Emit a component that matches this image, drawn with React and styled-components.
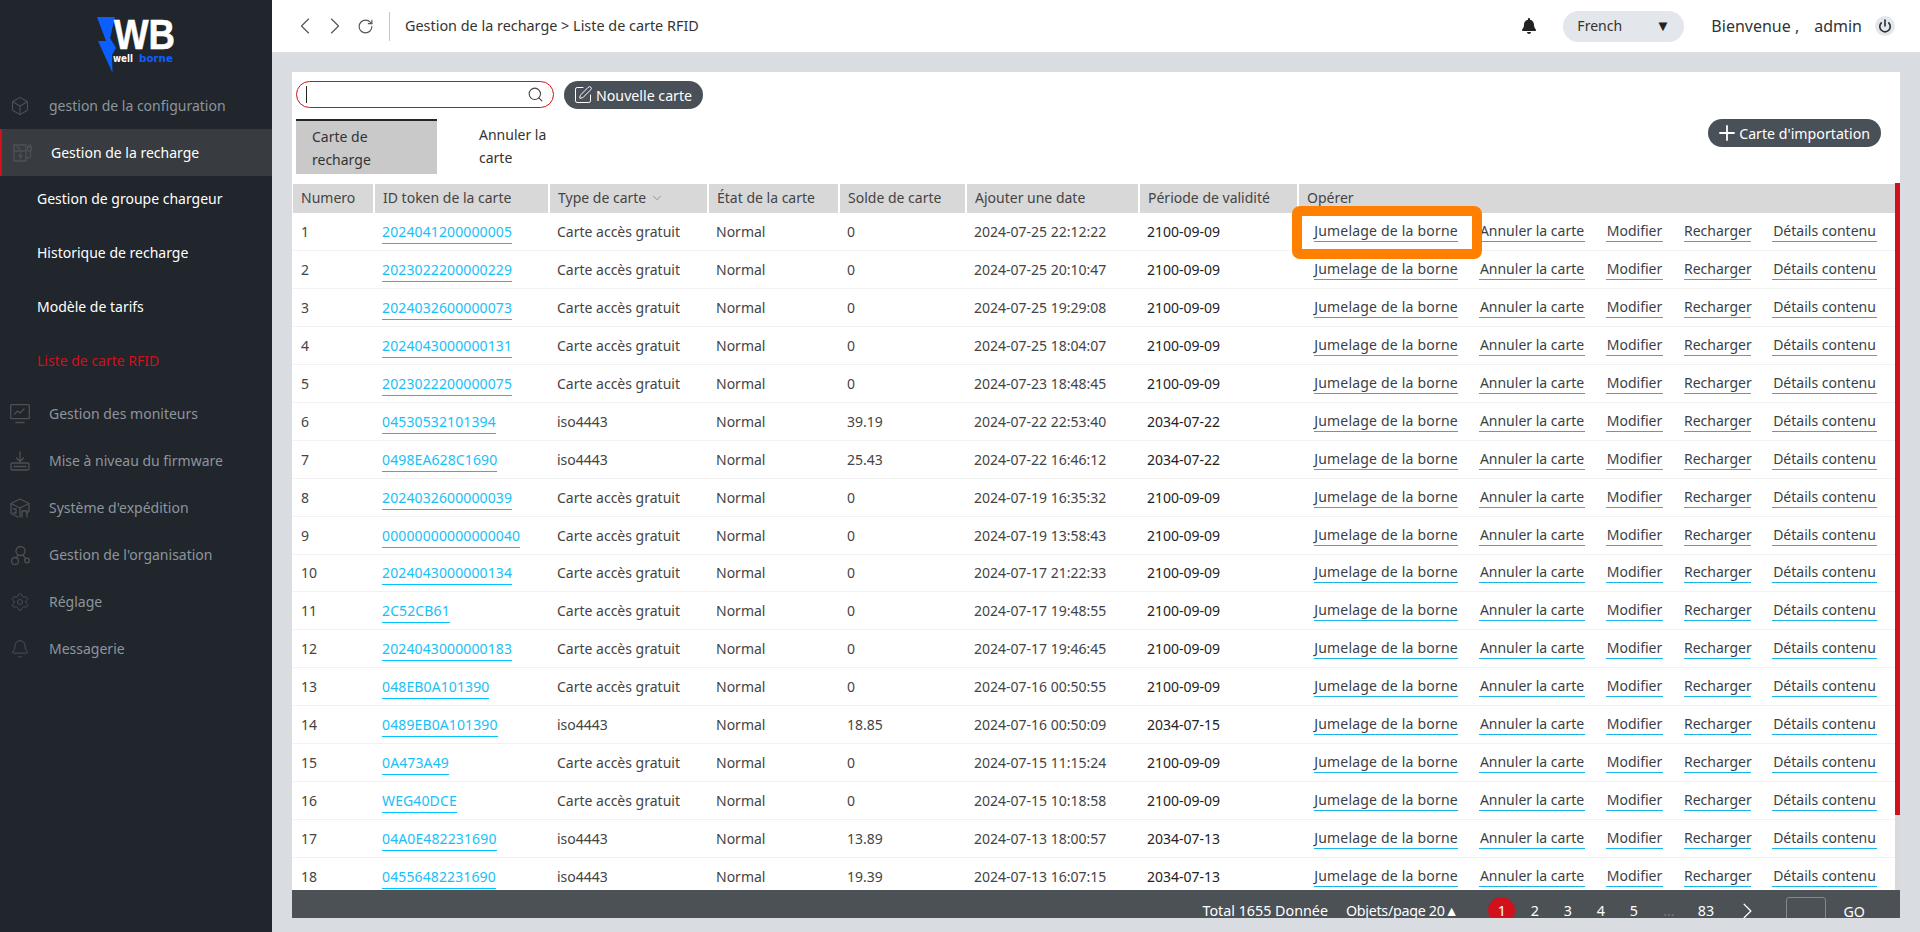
import React from "react";
import styled, { createGlobalStyle } from "styled-components";
import { Box, ChevronLeft, ChevronRight, ChevronDown, RotateCw, Search, SquarePen, Plus, Power, Settings, Bell } from "lucide-react";
import { FaBell } from "react-icons/fa";

const GlobalStyle = createGlobalStyle`
	html, body {
		margin: 0;
		height: 100%;
		overflow: hidden;
		background: #d9dce0;
		font-family: "Noto Sans", "Open Sans", Arial, sans-serif;
		font-size: 14px;
		color: #333;
	}
	* {
		box-sizing: border-box;
	}
`;

const Page = styled.div`
	display: flex;
	width: 1920px;
	height: 932px;
	position: relative;
`;

const Sidebar = styled.aside`
	width: 272px;
	flex-shrink: 0;
	background: #21252c;
`;

const LogoWrapper = styled.div`
	height: 82px;
	padding: 17px 0 0 96px;
`;

const MenuItem = styled.div`
	display: flex;
	align-items: center;
	height: 47px;
	padding-left: 10px;
	color: ${props => (props.$active ? "#fff" : "#8d959d")};
	background: ${props => (props.$active ? "#383c40" : "transparent")};
	border-left: ${props => (props.$active ? "2px solid #d0111b" : "none")};
	font-size: 14px;
`;

const MenuIconBox = styled.span`
	display: flex;
	width: 20px;
	height: 20px;
	margin-right: 19px;
	color: #4d5156;
`;

const SubMenu = styled.div`
	display: flex;
	flex-direction: column;
	gap: 10px;
	padding-bottom: 8px;
`;

const SubItem = styled.div`
	height: 44px;
	line-height: 46px;
	padding-left: 37px;
	font-size: 14px;
	color: ${props => (props.$active ? "#d0111b" : "#fff")};
`;

const Main = styled.div`
	flex: 1;
	min-width: 0;
	display: flex;
	flex-direction: column;
`;

const Header = styled.header`
	display: flex;
	align-items: center;
	height: 52px;
	background: #fff;
	padding: 0 25px 0 19px;
	color: #333;
`;

const NavButtons = styled.div`
	display: flex;
	align-items: center;
	gap: 2px;
	padding-right: 15px;
	color: #555;
	border-right: 1px solid #c4c4c4;
	height: 29px;
`;

const ReloadIcon = styled(RotateCw)`
	margin-left: 6px;
`;

const Crumb = styled.div`
	margin-left: 15px;
	padding-bottom: 2px;
	font-size: 14.4px;
	flex: 1;
`;

const LangSelect = styled.div`
	display: flex;
	align-items: center;
	justify-content: space-between;
	width: 121px;
	height: 31px;
	margin: 0 27px 0 26px;
	padding: 0 14px 2px;
	background: #e3e6ea;
	border-radius: 16px;
	font-size: 14px;
`;

const LangArrow = styled.span`
	color: #222;
	font-size: 15px;
`;

const Welcome = styled.div`
	font-size: 16px;
	display: flex;
	gap: 15px;
`;

const PowerButton = styled.span`
	display: flex;
	align-items: center;
	justify-content: center;
	width: 20px;
	height: 20px;
	margin-left: 13px;
	border-radius: 50%;
	background: #e3e6ea;
	color: #2a3038;
`;

const Content = styled.main`
	flex: 1;
	min-height: 0;
	padding: 20px 20px 14px;
`;

const Card = styled.section`
	display: flex;
	flex-direction: column;
	height: 100%;
	background: #fff;
	overflow: hidden;
`;

const Toolbar = styled.div`
	display: flex;
	align-items: flex-start;
	gap: 10px;
	padding: 9px 0 0 4px;
`;

const SearchBox = styled.div`
	display: flex;
	align-items: center;
	justify-content: space-between;
	width: 258px;
	height: 27px;
	padding: 0 9px 0 9px;
	border: 1px solid #d0111b;
	border-radius: 14px;
	color: #444;
`;

const Caret = styled.span`
	width: 1px;
	height: 17px;
	background: #222;
`;

const PillButton = styled.button`
	display: flex;
	align-items: center;
	gap: ${props => props.$gap};
	height: 28px;
	padding: 0 11px 0 ${props => props.$left};
	border: none;
	border-radius: 14px;
	background: #4a5058;
	color: #fff;
	font: inherit;
	font-size: 14.2px;
`;

const TabRow = styled.div`
	display: flex;
	align-items: flex-start;
	justify-content: space-between;
	height: 75px;
	padding: 10px 19px 0 4px;
`;

const Tabs = styled.div`
	display: flex;
`;

const Tab = styled.div`
	width: ${props => (props.$active ? "141px" : "132px")};
	height: 55px;
	padding: ${props => (props.$active ? "3.5px 50px 0 16px" : "3.5px 20px 0 42px")};
	line-height: 23px;
	background: ${props => (props.$active ? "#c9c9c9" : "transparent")};
	border-top: ${props => (props.$active ? "2px solid #21252c" : "none")};
	font-size: 14px;
`;

const TableArea = styled.div`
	flex: 1;
	min-height: 0;
	display: flex;
	padding-left: 1px;
`;

const TableClip = styled.div`
	flex: 1;
	min-width: 0;
	overflow: hidden;
`;

const Table = styled.table`
	width: 1602px;
	border-collapse: collapse;
	table-layout: fixed;
`;

const Th = styled.th`
	height: 29px;
	padding: 0 8px 2px;
	background: #d8d8d8;
	border-right: 2px solid #fff;
	font-weight: 400;
	font-size: 14px;
	text-align: left;
	white-space: nowrap;
	color: #444;
	&:last-child {
		border-right: none;
	}
`;

const SortIcon = styled(ChevronDown)`
	margin-left: 4px;
	vertical-align: -2px;
	color: #777;
`;

const Td = styled.td`
	height: 37.9px;
	padding: 0 8px;
	border-bottom: 1px solid #f2f2f2;
	font-size: 14px;
	white-space: nowrap;
	color: ${props => (props.$strong ? "#222" : "#444")};
`;

const TokenLink = styled.a`
	color: #19c0f7;
	border-bottom: 1px solid #00c4ff;
	padding-bottom: 2px;
	letter-spacing: 0.12px;
`;

const Actions = styled.div`
	display: grid;
	grid-template-columns: 144px 106px 57px 67px 105px;
	gap: 21px;
	padding-left: 8px;
`;

const ActionLink = styled.a`
	color: #3a3f47;
	border-bottom: 1px solid #19b5ea;
	padding-bottom: 1px;
	text-align: center;
	letter-spacing: ${props => (props.$wide ? "0.2px" : "0")};
`;

const ScrollTrack = styled.div`
	width: 5px;
	margin-top: -1px;
	background: #d9d9d9;
`;

const ScrollThumb = styled.div`
	height: 632px;
	background: #d0111b;
`;

const Footer = styled.footer`
	display: flex;
	align-items: flex-start;
	justify-content: flex-end;
	height: 28px;
	flex-shrink: 0;
	padding: 7px 35px 0 0;
	background: #4c5156;
	color: #fff;
	font-size: 14.3px;
	overflow: hidden;
	line-height: 27px;
`;

const FooterText = styled.span`
	margin-right: ${props => props.$gap || "0"};
	white-space: nowrap;
	letter-spacing: ${props => (props.$tight ? "-0.3px" : "0")};
`;

const PageNum = styled.span`
	display: flex;
	justify-content: center;
	flex-shrink: 0;
	width: 27px;
	height: 27px;
	margin-left: ${props => props.$gap || "6px"};
	border-radius: 50%;
	background: ${props => (props.$active ? "#d0111b" : "transparent")};
	color: ${props => (props.$muted ? "#777" : "#fff")};
`;

const PageInput = styled.span`
	width: 40px;
	height: 40px;
	margin-left: 25px;
	border: 1px solid #868a8e;
	border-radius: 3px;
`;

const GoLabel = styled.span`
	margin-left: 17px;
	padding-top: 1px;
`;

// annotation drawn on top of the screenshot
const Highlight = styled.div`
	position: absolute;
	left: 1292px;
	top: 206px;
	width: 190px;
	height: 53px;
	border: 10px solid #ff8000;
	border-radius: 8px;
`;

const Icon = ({ children }) => (
	<svg width="20" height="20" viewBox="0 0 20 20" fill="none" stroke="currentColor" strokeWidth="1.3" strokeLinecap="round" strokeLinejoin="round">
		{children}
	</svg>
);

const ChargerIcon = () => (
	<Icon>
		<path d="M2 2h12v16H2z" />
		<path d="M2 8h12M5 4l3 2M9 10l-2 3h3l-2 3M14 15h3a1.500 1.500 0 0 0 1.500-1.500V7" />
		<path d="M16.500 2v2M18.500 2v2M15.500 4h4v2a2 2 0 0 1-4 0z" />
	</Icon>
);

const MonitorIcon = () => (
	<Icon>
		<rect x="0.700" y="0.700" width="18.600" height="14" rx="1" />
		<path d="M4.500 10l3-3 2.500 2 4-4M6 18.500h8" />
	</Icon>
);

const UpgradeIcon = () => (
	<Icon>
		<path d="M10 1v9M6.500 7l3.500 3.500L13.500 7" />
		<rect x="1" y="12" width="18" height="7" rx="1.500" />
		<path d="M4 15.500h12" />
	</Icon>
);

const ShipIcon = () => (
	<Icon>
		<path d="M10 1l9 4.500v8l-3 1.500M10 1L1 5.500v10L8 19M1 5.500L10 10l9-4.500M10 10v9" />
		<path d="M12 19v-6h5v6M3.500 11h2.500v4H3.500" />
	</Icon>
);

const OrgIcon = () => (
	<Icon>
		<circle cx="10.500" cy="6" r="4.500" />
		<circle cx="5" cy="16" r="3.500" />
		<circle cx="17" cy="15.500" r="2.300" />
		<path d="M8 10l-1.500 3M13 10l2.500 4" />
	</Icon>
);

const Logo = () => (
	<svg width="82" height="58" viewBox="0 0 82 58">
		<polygon points="1,0 19,0 14,21 20,31 16,38 16.500,56 2,24 10,24" fill="#0b5fff" />
		<text x="18" y="31.500" fontFamily="Liberation Sans, sans-serif" fontWeight="700" fontSize="43" fill="#fff" stroke="#fff" strokeWidth="0.6" textLength="61" lengthAdjust="spacingAndGlyphs">WB</text>
		<text x="17" y="45" fontFamily="DejaVu Sans, sans-serif" fontWeight="700" fontSize="10" fill="#fff" textLength="20" lengthAdjust="spacingAndGlyphs">well</text>
		<text x="43" y="45" fontFamily="DejaVu Sans, sans-serif" fontWeight="700" fontSize="10" fill="#0b5fff" textLength="34" lengthAdjust="spacingAndGlyphs">borne</text>
	</svg>
);

const menuTop = [{ label: "gestion de la configuration", icon: <Box size={20} strokeWidth={1.3} /> }];
const menuBottom = [
	{ label: "Gestion des moniteurs", icon: <MonitorIcon /> },
	{ label: "Mise à niveau du firmware", icon: <UpgradeIcon /> },
	{ label: "Système d'expédition", icon: <ShipIcon /> },
	{ label: "Gestion de l'organisation", icon: <OrgIcon /> },
	{ label: "Réglage", icon: <Settings size={20} strokeWidth={1.1} /> },
	{ label: "Messagerie", icon: <Bell size={20} strokeWidth={1.2} /> },
];

const subItems = ["Gestion de groupe chargeur", "Historique de recharge", "Modèle de tarifs", "Liste de carte RFID"];

const columns = [81, 175, 159, 131, 127, 173, 159, 597];
const headers = ["Numero", "ID token de la carte", "Type de carte", "État de la carte", "Solde de carte", "Ajouter une date", "Période de validité", "Opérer"];

const FREE = "Carte accès gratuit";
const rows = [
	["2024041200000005", FREE, "0", "2024-07-25 22:12:22", "2100-09-09"],
	["2023022200000229", FREE, "0", "2024-07-25 20:10:47", "2100-09-09"],
	["2024032600000073", FREE, "0", "2024-07-25 19:29:08", "2100-09-09"],
	["2024043000000131", FREE, "0", "2024-07-25 18:04:07", "2100-09-09"],
	["2023022200000075", FREE, "0", "2024-07-23 18:48:45", "2100-09-09"],
	["04530532101394", "iso4443", "39.19", "2024-07-22 22:53:40", "2034-07-22"],
	["0498EA628C1690", "iso4443", "25.43", "2024-07-22 16:46:12", "2034-07-22"],
	["2024032600000039", FREE, "0", "2024-07-19 16:35:32", "2100-09-09"],
	["00000000000000040", FREE, "0", "2024-07-19 13:58:43", "2100-09-09"],
	["2024043000000134", FREE, "0", "2024-07-17 21:22:33", "2100-09-09"],
	["2C52CB61", FREE, "0", "2024-07-17 19:48:55", "2100-09-09"],
	["2024043000000183", FREE, "0", "2024-07-17 19:46:45", "2100-09-09"],
	["048EB0A101390", FREE, "0", "2024-07-16 00:50:55", "2100-09-09"],
	["0489EB0A101390", "iso4443", "18.85", "2024-07-16 00:50:09", "2034-07-15"],
	["0A473A49", FREE, "0", "2024-07-15 11:15:24", "2100-09-09"],
	["WEG40DCE", FREE, "0", "2024-07-15 10:18:58", "2100-09-09"],
	["04A0E482231690", "iso4443", "13.89", "2024-07-13 18:00:57", "2034-07-13"],
	["04556482231690", "iso4443", "19.39", "2024-07-13 16:07:15", "2034-07-13"],
];

const actions = ["Jumelage de la borne", "Annuler la carte", "Modifier", "Recharger", "Détails contenu"];

export default function App() {
	return (
		<Page>
			<GlobalStyle />
			<Sidebar>
				<LogoWrapper>
					<Logo />
				</LogoWrapper>
				{menuTop.map(item => (
					<MenuItem key={item.label}>
						<MenuIconBox>{item.icon}</MenuIconBox>
						{item.label}
					</MenuItem>
				))}
				<MenuItem $active>
					<MenuIconBox>
						<ChargerIcon />
					</MenuIconBox>
					Gestion de la recharge
				</MenuItem>
				<SubMenu>
					{subItems.map((label, i) => (
						<SubItem key={label} $active={i === 3}>
							{label}
						</SubItem>
					))}
				</SubMenu>
				{menuBottom.map(item => (
					<MenuItem key={item.label}>
						<MenuIconBox>{item.icon}</MenuIconBox>
						{item.label}
					</MenuItem>
				))}
			</Sidebar>
			<Main>
				<Header>
					<NavButtons>
						<ChevronLeft size={28} strokeWidth={1} />
						<ChevronRight size={28} strokeWidth={1} />
						<ReloadIcon size={17} strokeWidth={1.6} />
					</NavButtons>
					<Crumb>Gestion de la recharge &gt; Liste de carte RFID</Crumb>
					<FaBell size={16} color="#222" />
					<LangSelect>
						French
						<LangArrow>▼</LangArrow>
					</LangSelect>
					<Welcome>
						<span>Bienvenue ,</span>
						<span>admin</span>
					</Welcome>
					<PowerButton>
						<Power size={14} strokeWidth={2.8} />
					</PowerButton>
				</Header>
				<Content>
					<Card>
						<Toolbar>
							<SearchBox>
								<Caret />
								<Search size={17} strokeWidth={1.5} />
							</SearchBox>
							<PillButton $left="8.500px" $gap="3.500px">
								<SquarePen size={20} strokeWidth={1.2} />
								Nouvelle carte
							</PillButton>
						</Toolbar>
						<TabRow>
							<Tabs>
								<Tab $active>Carte de recharge</Tab>
								<Tab>Annuler la carte</Tab>
							</Tabs>
							<PillButton $left="7px" $gap="0">
								<Plus size={24} strokeWidth={1.8} />
								Carte d'importation
							</PillButton>
						</TabRow>
						<TableArea>
							<TableClip>
								<Table>
									<colgroup>
										{columns.map((w, i) => (
											<col key={i} width={w} />
										))}
									</colgroup>
									<thead>
										<tr>
											{headers.map((h, i) => (
												<Th key={h}>
													{h}
													{i === 2 && <SortIcon size={14} strokeWidth={1.2} />}
												</Th>
											))}
										</tr>
									</thead>
									<tbody>
										{rows.map((r, i) => (
											<tr key={r[0]}>
												<Td>{i + 1}</Td>
												<Td>
													<TokenLink>{r[0]}</TokenLink>
												</Td>
												<Td>{r[1]}</Td>
												<Td>Normal</Td>
												<Td>{r[2]}</Td>
												<Td>{r[3]}</Td>
												<Td $strong>{r[4]}</Td>
												<Td>
													<Actions>
														{actions.map((a, n) => (
															<ActionLink key={a} $wide={n === 0}>
																{a}
															</ActionLink>
														))}
													</Actions>
												</Td>
											</tr>
										))}
									</tbody>
								</Table>
							</TableClip>
							<ScrollTrack>
								<ScrollThumb />
							</ScrollTrack>
						</TableArea>
						<Footer>
							<FooterText $gap="18px">Total 1655 Donnée</FooterText>
							<FooterText $gap="24px" $tight>
								Objets/page 20▲
							</FooterText>
							<PageNum $active>1</PageNum>
							<PageNum>2</PageNum>
							<PageNum>3</PageNum>
							<PageNum>4</PageNum>
							<PageNum>5</PageNum>
							<PageNum $gap="8px" $muted>...</PageNum>
							<PageNum $gap="10px">83</PageNum>
							<PageNum $gap="15px">
								<ChevronRight size={28} strokeWidth={1.1} />
							</PageNum>
							<PageInput />
							<GoLabel>GO</GoLabel>
						</Footer>
					</Card>
				</Content>
			</Main>
			<Highlight />
		</Page>
	);
}
